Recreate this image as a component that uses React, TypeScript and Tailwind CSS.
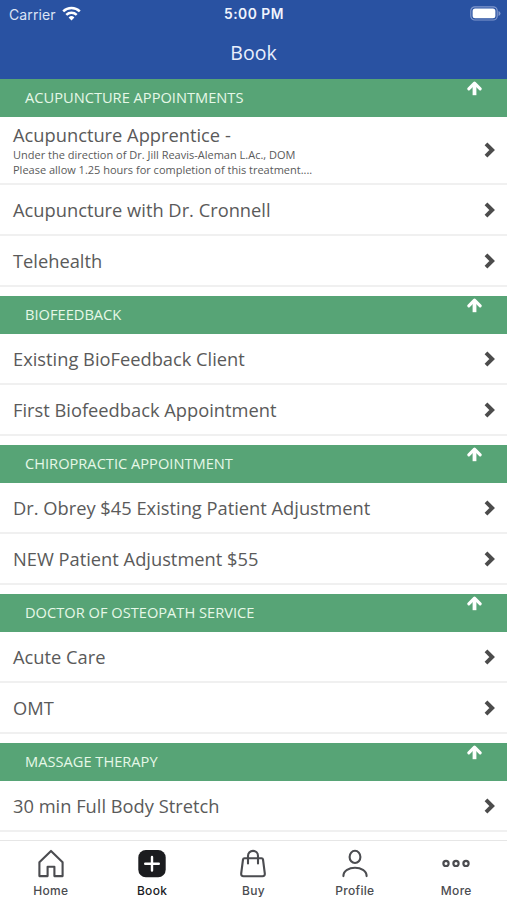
type Service = { name: string; notes?: string[] };

const sections: { title: string; services: Service[] }[] = [
  {
    title: "Acupuncture Appointments",
    services: [
      {
        name: "Acupuncture Apprentice -",
        notes: [
          "Under the direction of Dr. Jill Reavis-Aleman L.Ac., DOM",
          "Please allow 1.25 hours for completion of this treatment....",
        ],
      },
      { name: "Acupuncture with Dr. Cronnell" },
      { name: "Telehealth" },
    ],
  },
  {
    title: "Biofeedback",
    services: [{ name: "Existing BioFeedback Client" }, { name: "First Biofeedback Appointment" }],
  },
  {
    title: "Chiropractic Appointment",
    services: [
      { name: "Dr. Obrey $45 Existing Patient Adjustment" },
      { name: "NEW Patient Adjustment $55" },
    ],
  },
  {
    title: "Doctor of Osteopath Service",
    services: [{ name: "Acute Care" }, { name: "OMT" }],
  },
  {
    title: "Massage Therapy",
    services: [{ name: "30 min Full Body Stretch" }],
  },
];

const ArrowUpIcon = () => (
  <svg className="mt-[1px]" width="17" height="16" viewBox="0 0 17 16" fill="none" stroke="white" strokeWidth="3.8">
    <path d="M8.5 15.2V4" />
    <path d="M2.8 8.9 8.5 3.2l5.7 5.7" strokeLinejoin="round" strokeLinecap="round" strokeWidth="3.1" />
  </svg>
);

const ChevronIcon = () => (
  <svg width="12" height="16" viewBox="0 0 12 16" fill="none" stroke="#4c4c4c" strokeWidth="3.9">
    <path d="M2 1.8 8.2 8 2 14.2" />
  </svg>
);

const HomeIcon = () => (
  <svg width="30" height="30" viewBox="0 0 30 30" fill="none" stroke="currentColor" strokeWidth="2.1" strokeLinejoin="round">
    <path d="M3.4 13.2 15 1.9l11.6 11.3v13.9h-8.2v-9.4h-6.8v9.4H3.4z" />
  </svg>
);

const BookIcon = () => (
  <svg width="30" height="30" viewBox="0 0 30 30" fill="none">
    <rect x="1.3" y="1" width="27.4" height="27.2" rx="7.5" fill="currentColor" />
    <path d="M15 8v13.6M8.2 14.8h13.6" stroke="white" strokeWidth="2.4" strokeLinecap="round" />
  </svg>
);

const BuyIcon = () => (
  <svg width="30" height="30" viewBox="0 0 30 30" fill="none" stroke="currentColor" strokeWidth="2.1" strokeLinejoin="round" strokeLinecap="round">
    <path d="M6.4 9.3h17.2q1.2 0 1.4 1.2l1.8 14q.2 2.7-2.3 2.7H5.5q-2.5 0-2.3-2.7l1.8-14q.2-1.2 1.4-1.2z" />
    <path d="M10 14.4V6.9a5 5 0 0 1 10 0v7.5" />
  </svg>
);

const ProfileIcon = () => (
  <svg width="30" height="30" viewBox="0 0 30 30" fill="none" stroke="currentColor" strokeWidth="2.1" strokeLinecap="round">
    <ellipse cx="15" cy="7.9" rx="5.4" ry="6.1" />
    <path d="M3.4 27.1c0-11.2 23.2-11.2 23.2 0" />
  </svg>
);

const MoreIcon = () => (
  <svg width="30" height="30" viewBox="0 0 30 30" fill="none" stroke="currentColor" strokeWidth="2.2">
    <circle cx="5" cy="14.4" r="2.6" />
    <circle cx="15" cy="14.4" r="2.6" />
    <circle cx="25" cy="14.4" r="2.6" />
  </svg>
);

const tabs = [
  { label: "Home", icon: HomeIcon },
  { label: "Book", icon: BookIcon, active: true },
  { label: "Buy", icon: BuyIcon },
  { label: "Profile", icon: ProfileIcon },
  { label: "More", icon: MoreIcon },
];

const StatusBar = () => (
  <div className="grid grid-cols-3 items-center h-[28px] pl-[9px] pr-[8px] font-['Inter',sans-serif] text-[13.8px]">
    <div className="flex items-center gap-[6px]">
      <span className="text-[14px] tracking-[0.1px] text-[#dce4f5]">Carrier</span>
      <svg className="-mt-[2px]" width="19" height="15" viewBox="0 0 19 15" fill="none" stroke="white" strokeWidth="2.5">
        <path d="M1.2 5.3a12 12 0 0 1 16.6 0" />
        <path d="M4.3 8.9a7.6 7.6 0 0 1 10.4 0" />
        <path d="M9.5 14.4 6.6 11.4a4.2 4.2 0 0 1 5.8 0z" fill="white" stroke="none" />
      </svg>
    </div>
    <span className="text-center font-semibold tracking-[0.5px] text-[#f0f4fd]">5:00 PM</span>
    <svg className="-mt-[1px] -mr-[2px] justify-self-end" width="31" height="15" viewBox="0 0 31 15" fill="none">
      <rect x="0.8" y="0.8" width="26.4" height="13.2" rx="4" stroke="#8198cd" strokeWidth="1.2" />
      <rect x="2.6" y="2.6" width="22.8" height="9.6" rx="2.5" fill="white" />
      <path d="M28.5 5v5q2-.8 2-2.5T28.5 5z" fill="#8198cd" />
    </svg>
  </div>
);

const App = () => {
  return (
    <div className="flex flex-col h-[900px] w-full overflow-hidden bg-white font-['Open_Sans',sans-serif] text-[#5a5a5a]">
      <header className="h-[79px] shrink-0 bg-[#2952a2] text-white">
        <StatusBar />
        <h1 className="text-center text-[19.5px] leading-[50px] text-[#e9effc]">Book</h1>
      </header>

      {/* Service list */}
      <main className="flex-1 overflow-hidden">
        {sections.map(({ title, services }) => (
          <section key={title} className="pb-[8.5px]">
            <div className="flex items-start justify-between h-[38px] bg-[#57a476] pl-[25px] pr-[24px]">
              <h2 className="text-[14.65px] leading-[37px] uppercase text-[#e6f8e8]">{title}</h2>
              <ArrowUpIcon />
            </div>
            {services.map(({ name, notes }) => (
              <div
                key={name}
                className={[
                  "flex items-center justify-between border-b-2 border-[#f0f0f0] pt-[1px] pl-[13px] pr-[11px]",
                  notes ? "h-[67.5px]" : "h-[51.25px]",
                ].join(" ")}
              >
                <div>
                  <p className="text-[18.3px] leading-[24px]">{name}</p>
                  {notes?.map((note) => (
                    <p key={note} className="text-[11px] leading-[15px]">
                      {note}
                    </p>
                  ))}
                </div>
                <ChevronIcon />
              </div>
            ))}
          </section>
        ))}
      </main>

      {/* Tab bar */}
      <nav className="grid grid-cols-5 h-[60px] shrink-0 border-t border-[#e6e6e6] bg-white font-['Inter',sans-serif]">
        {tabs.map(({ label, icon: Icon, active }) => (
          <div
            key={label}
            className={[
              "flex flex-col items-center pt-[8px]",
              active ? "text-[#1b1c1f]" : "text-[#4b4c50]",
            ].join(" ")}
          >
            <Icon />
            <span className="mt-[4px] text-[12px] leading-[16px] font-medium tracking-[0.3px]">{label}</span>
          </div>
        ))}
      </nav>
    </div>
  );
};

export default App;
